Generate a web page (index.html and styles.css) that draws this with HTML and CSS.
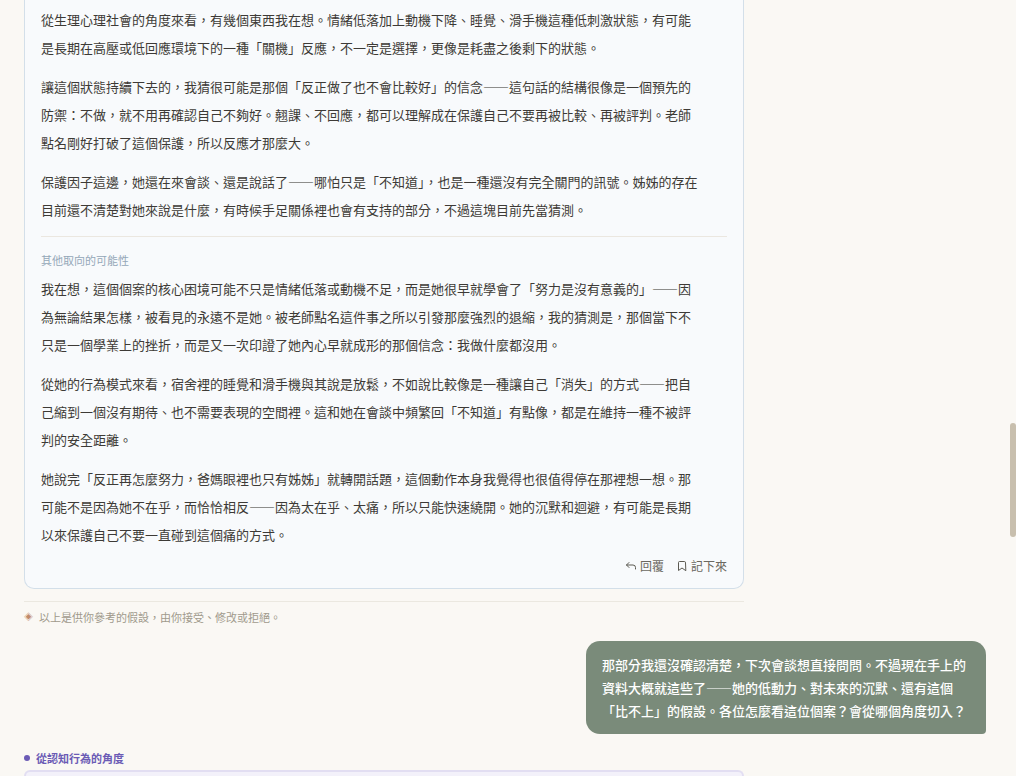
FILE: index.html
```html
<!DOCTYPE html>
<html lang="zh-Hant">

<head>
    <meta charset="UTF-8">
    <meta name="viewport" content="width=device-width, initial-scale=1.0">
    <title>個案討論</title>
    <link rel="stylesheet" href="styles.css">
</head>

<body>
    <main class="chat">
        <article class="card">
            <div class="text">
                <p>從生理心理社會的角度來看，有幾個東西我在想。情緒低落加上動機下降、睡覺、滑手機這種低刺激狀態，有可能是長期在高壓或低回應環境下的一種「關機」反應，不一定是選擇，更像是耗盡之後剩下的狀態。</p>
                <p>讓這個狀態持續下去的，我猜很可能是那個「反正做了也不會比較好」的信念——這句話的結構很像是一個預先的防禦：不做，就不用再確認自己不夠好。翹課、不回應，都可以理解成在保護自己不要再被比較、再被評判。老師點名剛好打破了這個保護，所以反應才那麼大。</p>
                <p>保護因子這邊，她還在來會談、還是說話了——哪怕只是「不知道」，也是一種還沒有完全關門的訊號。姊姊的存在目前還不清楚對她來說是什麼，有時候手足關係裡也會有支持的部分，不過這塊目前先當猜測。</p>
            </div>
            <section class="other">
                <h3 class="other-title">其他取向的可能性</h3>
                <div class="text">
                    <p>我在想，這個個案的核心困境可能不只是情緒低落或動機不足，而是她很早就學會了「努力是沒有意義的」——因為無論結果怎樣，被看見的永遠不是她。被老師點名這件事之所以引發那麼強烈的退縮，我的猜測是，那個當下不只是一個學業上的挫折，而是又一次印證了她內心早就成形的那個信念：我做什麼都沒用。</p>
                    <p>從她的行為模式來看，宿舍裡的睡覺和滑手機與其說是放鬆，不如說比較像是一種讓自己「消失」的方式——把自己縮到一個沒有期待、也不需要表現的空間裡。這和她在會談中頻繁回「不知道」有點像，都是在維持一種不被評判的安全距離。</p>
                    <p>她說完「反正再怎麼努力，爸媽眼裡也只有姊姊」就轉開話題，這個動作本身我覺得也很值得停在那裡想一想。那可能不是因為她不在乎，而恰恰相反——因為太在乎、太痛，所以只能快速繞開。她的沉默和迴避，有可能是長期以來保護自己不要一直碰到這個痛的方式。</p>
                </div>
            </section>
            <div class="actions">
                <button type="button" class="action">
                    <svg class="icon" viewBox="0 0 24 24" aria-hidden="true">
                        <path d="M8 5 3 10l5 5M3 10h13a5 5 0 0 1 5 5v3" />
                    </svg>
                    <span>回覆</span>
                </button>
                <button type="button" class="action">
                    <svg class="icon" viewBox="0 0 24 24" aria-hidden="true">
                        <path d="M19 21l-7-5-7 5V5a2 2 0 0 1 2-2h10a2 2 0 0 1 2 2z" />
                    </svg>
                    <span>記下來</span>
                </button>
            </div>
        </article>

        <div class="note">
            <span class="note-mark">◈</span>
            <span>以上是供你參考的假設，由你接受、修改或拒絕。</span>
        </div>

        <div class="bubble">那部分我還沒確認清楚，下次會談想直接問問。不過現在手上的資料大概就這些了——她的低動力、對未來的沉默、還有這個「比不上」的假設。各位怎麼看這位個案？會從哪個角度切入？</div>

        <h2 class="speaker">從認知行為的角度</h2>
        <article class="card-next"></article>
    </main>
    <div class="scroll-thumb"></div>
</body>

</html>
```

FILE: styles.css
```css
* {
    box-sizing: border-box;
}

body {
    margin: 0;
    background-color: #faf8f4;
    color: #3d3a36;
    font-family: "Noto Sans CJK TC", sans-serif;
    font-size: 13px;
}

.chat {
    display: flex;
    flex-direction: column;
    min-height: 100vh;
    padding: 0 30px 0 24px;
}

.card {
    max-width: 720px;
    padding: 6px 16px 13px;
    background-color: #f8fafc;
    border: 1px solid #d3dfe9;
    border-top: none;
    border-radius: 0 0 10px 10px;
}

.text {
    display: flex;
    flex-direction: column;
    gap: 11px;
    max-width: 660px;
    line-height: 28px;
}

.text p {
    margin: 0;
}

.other {
    margin-top: 12px;
    padding-top: 14px;
    border-top: 1px solid #ebe7e0;
}

.other-title {
    margin: 0 0 6px;
    color: #94a7b8;
    font-size: 11px;
    font-weight: 400;
    line-height: 18px;
}

.actions {
    display: flex;
    justify-content: flex-end;
    gap: 12px;
    margin-top: 8px;
}

.action {
    display: flex;
    align-items: center;
    gap: 3px;
    padding: 0;
    background: none;
    border: none;
    color: #6b6860;
    font-family: inherit;
    font-size: 12px;
    line-height: 18px;
    cursor: pointer;
}

.icon {
    width: 12px;
    height: 12px;
    fill: none;
    stroke: #5c5a52;
    stroke-width: 2;
    stroke-linecap: round;
    stroke-linejoin: round;
}

.note {
    display: flex;
    gap: 6px;
    max-width: 720px;
    margin-top: 12px;
    padding-top: 6px;
    border-top: 1px solid #ebe8e0;
    color: #a09a8c;
    font-size: 11px;
    line-height: 18px;
}

.note-mark {
    color: #c08a6a;
    font-size: 9px;
}

.bubble {
    align-self: flex-end;
    max-width: 400px;
    margin-top: 15px;
    padding: 12px 16px;
    background-color: #7a8b7a;
    border-radius: 14px 14px 4px 14px;
    color: #fff;
    font-weight: 500;
    line-height: 23px;
}

.speaker {
    display: flex;
    align-items: center;
    gap: 6px;
    margin: 15px 0 3px;
    color: #6b5bb5;
    font-size: 11px;
    font-weight: 700;
    line-height: 18px;
}

.speaker::before {
    content: "";
    width: 6px;
    height: 6px;
    background-color: #6b5bb5;
    border-radius: 50%;
}

.card-next {
    flex: 1;
    max-width: 720px;
    background-color: #f3f1fa;
    border: 2px solid #e2def2;
    border-bottom: none;
    border-radius: 10px 10px 0 0;
}

.scroll-thumb {
    position: fixed;
    top: 423px;
    right: 0;
    width: 6px;
    height: 114px;
    background-color: #c8bfae;
    border-radius: 3px;
}
```
